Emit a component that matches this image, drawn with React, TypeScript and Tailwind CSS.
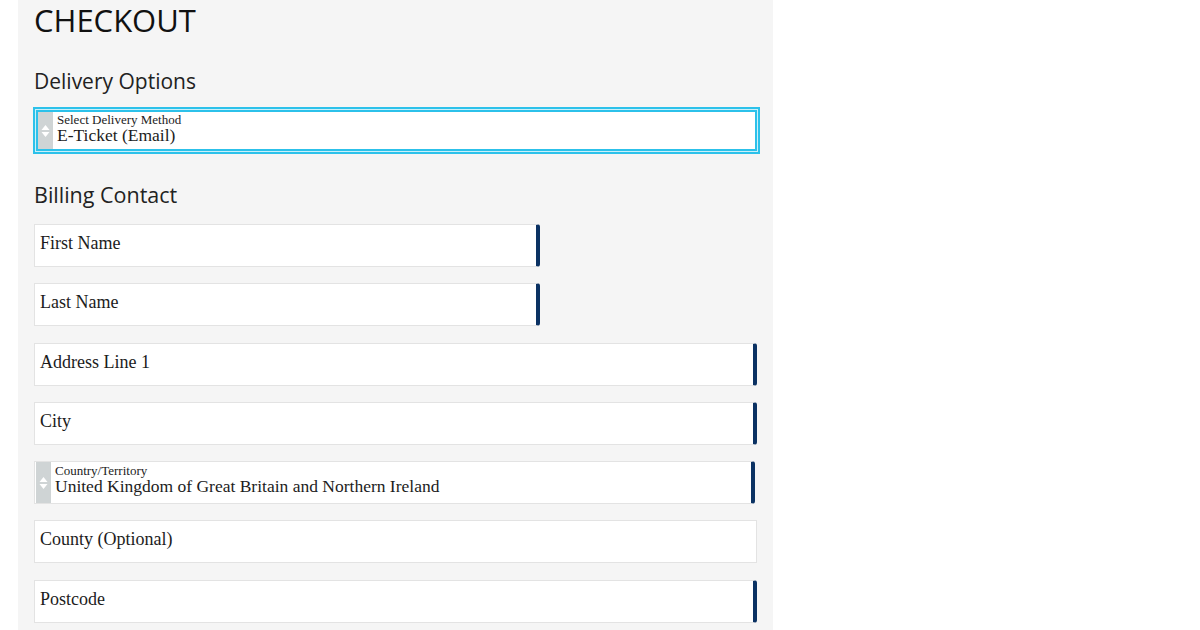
import React from "react";

const serif = { fontFamily: '"Liberation Serif", "DejaVu Serif", serif' };
const sans = { fontFamily: '"Open Sans", "Noto Sans", sans-serif' };

function SelectArrows() {
  return (
    <div className="flex w-[15px] shrink-0 items-center justify-center bg-[#cfd4d5]">
      <svg width="9" height="14" viewBox="0 0 9 14">
        <path d="M4.5 1 L8.5 6 L0.5 6 Z" fill="#ffffff" />
        <path d="M4.5 13 L8.5 8 L0.5 8 Z" fill="#ffffff" />
      </svg>
    </div>
  );
}

function TextField({ label, required = true, wide = true }: { label: string; required?: boolean; wide?: boolean }) {
  return (
    <div
      className={`flex h-[43px] items-center border border-[#e3e3e3] bg-white pb-[4px] pl-[5px] ${
        wide ? "w-[723px]" : "w-[506px]"
      } ${required ? "rounded-r-[3px] border-r-[4px] border-r-[#0b3263]" : ""}`}
    >
      <span className="text-[18px] text-[#1c1c1c]" style={serif}>
        {label}
      </span>
    </div>
  );
}

function SelectField({ label, value, focused = false }: { label: string; value: string; focused?: boolean }) {
  if (focused) {
    return (
      <div className="w-[727px] border-2 border-[#2cc1ea] bg-[#c9f0fa] p-px">
        <div className="flex h-[41px] border-2 border-[#2cc1ea] bg-white">
          <SelectArrows />
          <div className="flex flex-col justify-center pb-[4px] pl-[4px] leading-none" style={serif}>
            <span className="text-[13px] text-[#222]">{label}</span>
            <span className="mt-[1px] text-[17.5px] text-[#1c1c1c]">{value}</span>
          </div>
        </div>
      </div>
    );
  }
  return (
    <div className="flex h-[43px] w-[721px] rounded-r-[3px] border border-[#e3e3e3] border-r-[4px] border-r-[#0b3263] bg-white pl-px">
      <SelectArrows />
      <div className="flex flex-col justify-center pb-[5px] pl-[4px] leading-none" style={serif}>
        <span className="text-[13px] text-[#222]">{label}</span>
        <span className="mt-[1px] text-[17.5px] text-[#1c1c1c]">{value}</span>
      </div>
    </div>
  );
}

export default function App() {
  return (
    <div className="h-[630px] w-[1200px] overflow-hidden bg-white">
      <div className="ml-[18px] h-full w-[755px] bg-[#f5f5f5] pl-[16px] pt-[1px]">
        <h1 className="text-[31px] leading-[38px] text-[#111]" style={sans}>
          CHECKOUT
        </h1>
        <h2 className="mt-[29px] text-[21px] leading-[27px] text-[#222]" style={sans}>
          Delivery Options
        </h2>
        <div className="mt-[12px] -ml-px">
          <SelectField label="Select Delivery Method" value="E-Ticket (Email)" focused />
        </div>
        <h2 className="mt-[27px] text-[21.5px] leading-[27px] text-[#222]" style={sans}>
          Billing Contact
        </h2>
        <div className="mt-[16px] flex flex-col gap-[16.3px]">
          <TextField label="First Name" wide={false} />
          <TextField label="Last Name" wide={false} />
          <TextField label="Address Line 1" />
          <TextField label="City" />
          <SelectField label="Country/Territory" value="United Kingdom of Great Britain and Northern Ireland" />
          <TextField label="County (Optional)" required={false} />
          <TextField label="Postcode" />
        </div>
      </div>
    </div>
  );
}
